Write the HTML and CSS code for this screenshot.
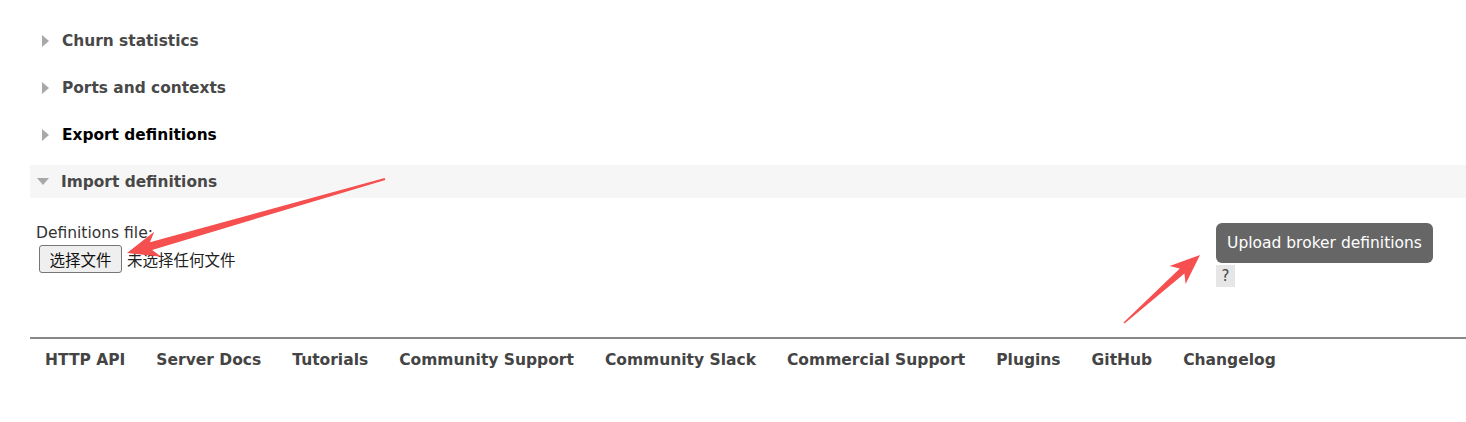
FILE: index.html
```html
<!DOCTYPE html>
<html>
<head>
<meta charset="utf-8">
<link rel="stylesheet" href="styles.css">
</head>
<body>
<div class="page">
  <div class="section">
    <h2 class="section-head"><span class="tri tri-right"></span>Churn statistics</h2>
  </div>
  <div class="section">
    <h2 class="section-head"><span class="tri tri-right"></span>Ports and contexts</h2>
  </div>
  <div class="section">
    <h2 class="section-head active"><span class="tri tri-right"></span>Export definitions</h2>
  </div>
  <div class="section">
    <h2 class="section-head open"><span class="tri tri-down"></span>Import definitions</h2>
    <div class="import-body">
      <div class="file-field">
        <label class="file-label">Definitions file:</label>
        <div class="file-row">
          <span class="file-btn">选择文件</span>
          <span class="file-none">未选择任何文件</span>
        </div>
      </div>
      <div class="upload">
        <span class="upload-btn">Upload broker definitions</span>
        <span class="help">?</span>
      </div>
    </div>
  </div>
  <div class="footer">
    <a>HTTP API</a>
    <a>Server Docs</a>
    <a>Tutorials</a>
    <a>Community Support</a>
    <a>Community Slack</a>
    <a>Commercial Support</a>
    <a>Plugins</a>
    <a>GitHub</a>
    <a>Changelog</a>
  </div>
</div>
<svg class="annot" width="1466" height="422" viewBox="0 0 1466 422">
  <polygon fill="#f54f4f" points="385.3,180 152.1,249.9 161.4,256.7 127,253 154.2,231.7 149.9,242.3 384.7,178"/>
  <polygon fill="#f54f4f" points="1124.5,323.6 1184.4,273.6 1185.6,283.9 1200,255 1169.6,266.1 1179.8,268.4 1123.5,322.4"/>
</svg>
</body>
</html>
```
FILE: styles.css
```css
html, body {
  margin: 0;
  padding: 0;
  background: #fff;
}
body {
  position: relative;
  width: 1466px;
  height: 422px;
  overflow: hidden;
  font-family: "DejaVu Sans", Verdana, sans-serif;
  color: #444;
}
.page {
  padding: 24px 0 0 30px;
}
.section {
  margin-bottom: 14px;
}
.section-head {
  display: flex;
  align-items: center;
  height: 33px;
  margin: 0;
  padding-left: 7px;
  font-size: 15.4px;
  font-weight: bold;
  color: #484848;
}
.section-head.active {
  color: #000;
}
.section-head.open {
  background: #f6f6f6;
}
.tri {
  display: inline-block;
  width: 0;
  height: 0;
}
.tri-right {
  margin-left: 5px;
  margin-right: 13px;
  border-top: 6px solid transparent;
  border-bottom: 6px solid transparent;
  border-left: 7px solid #a8a8a8;
}
.tri-down {
  margin-right: 12px;
  border-left: 6.5px solid transparent;
  border-right: 6.5px solid transparent;
  border-top: 7px solid #a8a8a8;
}
.import-body {
  display: flex;
  justify-content: space-between;
  padding: 26px 33px 0 6px;
  height: 99px;
}
.file-field {
  display: flex;
  flex-direction: column;
}
.file-label {
  font-size: 15.5px;
  color: #333;
  line-height: 18px;
}
.file-row {
  display: flex;
  align-items: center;
  margin-top: 3px;
  margin-left: 3px;
}
.file-btn {
  box-sizing: border-box;
  width: 83px;
  height: 28px;
  display: flex;
  align-items: center;
  justify-content: center;
  background: #efefef;
  border: 1px solid #767676;
  border-radius: 3px;
  font-family: "Noto Sans CJK SC", sans-serif;
  font-size: 15.5px;
  color: #111;
}
.file-none {
  margin-left: 5px;
  font-family: "Noto Sans CJK SC", sans-serif;
  font-size: 15.5px;
  color: #222;
}
.upload {
  display: flex;
  flex-direction: column;
  align-items: flex-start;
  margin-top: -1px;
}
.upload-btn {
  box-sizing: border-box;
  height: 40px;
  width: 217px;
  display: flex;
  align-items: center;
  justify-content: center;
  background: #666;
  color: #fff;
  border-radius: 6px;
  font-size: 15.5px;
}
.help {
  margin-top: 2px;
  width: 19px;
  height: 22px;
  background: #e6e6e6;
  color: #444;
  font-size: 15px;
  display: flex;
  align-items: center;
  justify-content: center;
}
.footer {
  border-top: 2px solid #888;
  display: flex;
  padding: 10px 0 0 15px;
}
.footer a {
  font-size: 15.5px;
  font-weight: bold;
  color: #444;
  margin-right: 31px;
  line-height: 22px;
}
.annot {
  position: absolute;
  left: 0;
  top: 0;
  pointer-events: none;
}
```
